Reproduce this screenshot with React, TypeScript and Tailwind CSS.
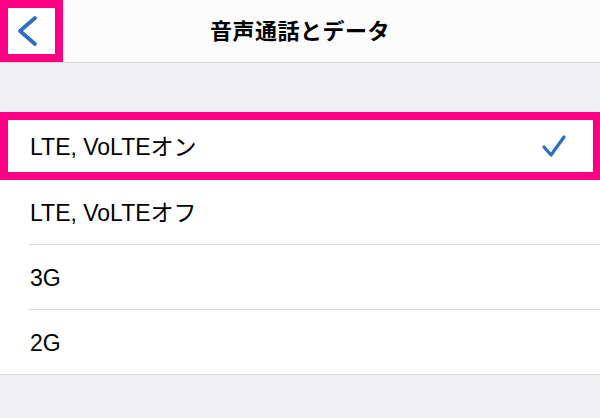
export default function App() {
  const font = { fontFamily: '"Liberation Sans", "Noto Sans CJK JP", sans-serif' };
  return (
    <div className="w-[600px] h-[418px] bg-[#efeff4] overflow-hidden text-black" style={font}>
      {/* nav bar */}
      <div className="grid grid-cols-[63px_1fr_63px] h-[63px] bg-[#fcfcfc] border-b border-[#d3d3d6]">
        <div className="h-[62px] border-8 border-[#fc0083] bg-white flex items-center pl-[8px]">
          <svg width="24" height="32" viewBox="0 0 24 32">
            <polyline
              points="19,3 4,16 19,29"
              fill="none"
              stroke="#2c6fbd"
              strokeWidth="3.8"
              strokeLinecap="round"
              strokeLinejoin="round"
            />
          </svg>
        </div>
        <div className="flex items-center justify-center text-[22px] font-bold tracking-[0.5px]">
          音声通話とデータ
        </div>
        <div />
      </div>

      <div className="h-[49px]" />

      {/* list */}
      <div className="bg-white border-b border-[#dadadc] text-[23px]">
        <div className="h-[68px] border-8 border-[#fc0083] border-r-[7px] flex items-center pl-[22px] pr-[26px]">
          <span className="flex-1 mt-[3px]">LTE, VoLTEオン</span>
          <svg width="26" height="24" viewBox="0 0 26 24">
            <polyline
              points="3,13 10,21 23,3"
              fill="none"
              stroke="#2c6fbd"
              strokeWidth="3.2"
              strokeLinecap="round"
              strokeLinejoin="round"
            />
          </svg>
        </div>
        <div className="h-[64px] flex items-center pl-[30px] pt-[3px]">LTE, VoLTEオフ</div>
        <div className="ml-[29px] border-t border-[#dadadc]" />
        <div className="h-[64px] flex items-center pl-[30px] pt-[3px]">3G</div>
        <div className="ml-[29px] border-t border-[#dadadc]" />
        <div className="h-[64px] flex items-center pl-[30px] pt-[3px]">2G</div>
      </div>
    </div>
  );
}
